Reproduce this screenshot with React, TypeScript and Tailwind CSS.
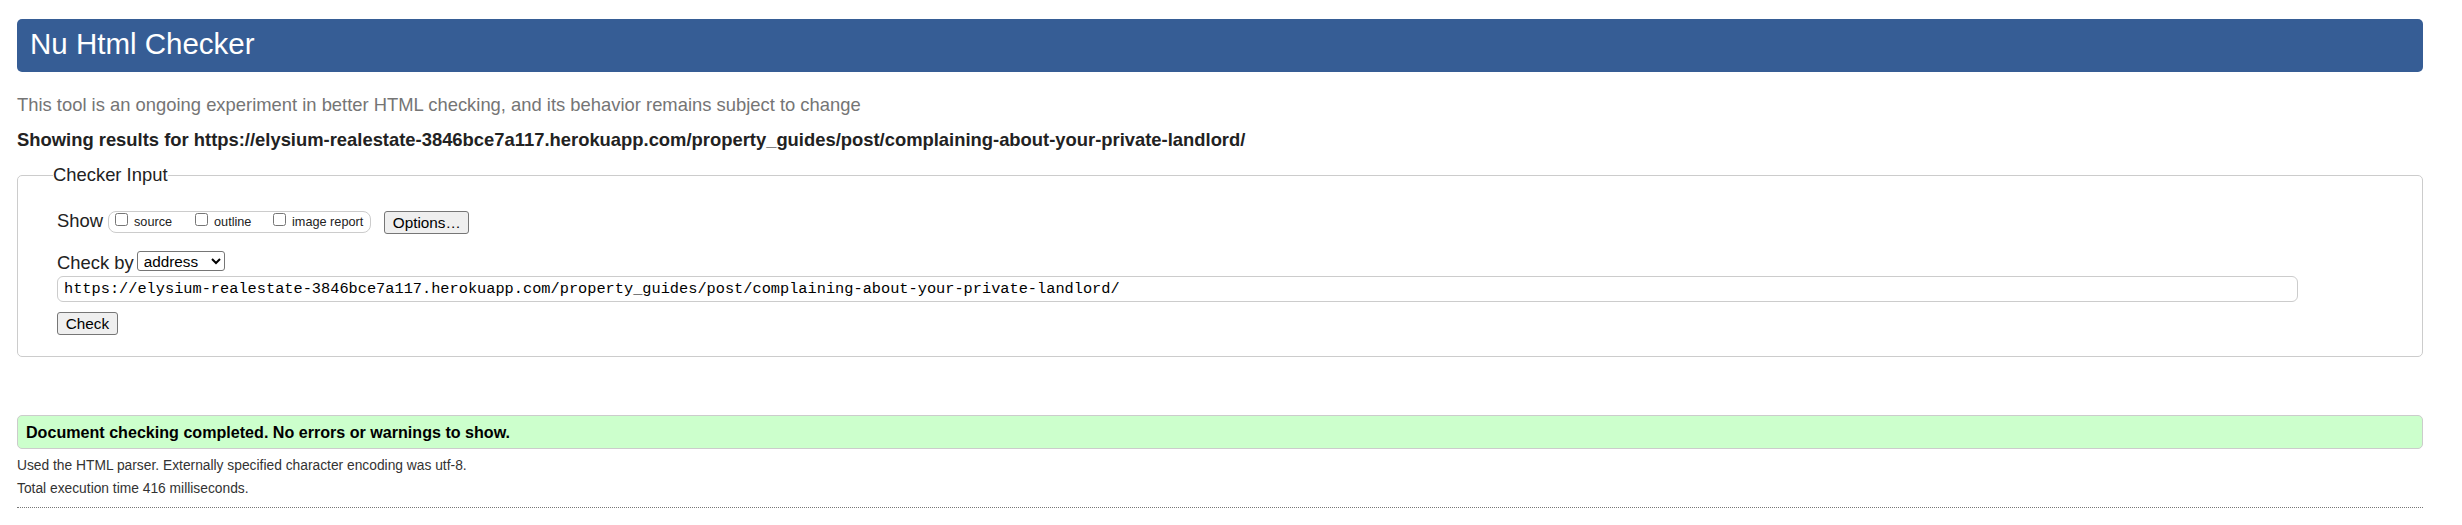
import React from 'react';

const url = 'https://elysium-realestate-3846bce7a117.herokuapp.com/property_guides/post/complaining-about-your-private-landlord/';

const showOptions = [
  { label: 'source', width: 'w-[80px]' },
  { label: 'outline', width: 'w-[78px]' },
  { label: 'image report', width: '' },
];

export default function App() {
  return (
    <div className="min-h-screen bg-white font-['Liberation_Sans',Arial,sans-serif] text-[#222] pl-[17px] pr-[39px] pt-[19px]">
      <h1 className="h-[53px] rounded-[5px] bg-[#365d95] pl-[13px] text-[29.5px] font-normal leading-[50px] text-white">
        Nu Html Checker
      </h1>

      <p className="mt-[21px] text-[18.4px] leading-[24px] text-[#757575]">
        This tool is an ongoing experiment in better HTML checking, and its behavior remains subject to change
      </p>
      <p className="mt-[11px] text-[18.4px] font-bold leading-[24px] text-[#222]">Showing results for {url}</p>

      <fieldset className="mt-[11px] rounded-[5px] border border-[#cccccc] pl-[39px] pb-[21px]">
        <legend className="ml-[-4px] p-0 text-[18.4px] leading-[24px]">Checker Input</legend>

        {/* show row */}
        <div className="mt-[24px] flex items-start">
          <span className="text-[18.4px] leading-[19px]">Show</span>
          <span className="ml-[5px] flex h-[22px] items-start rounded-[8px] border border-[#cccccc] pl-[6px] pr-[7px]">
            {showOptions.map((opt) => (
              <label key={opt.label} className={`flex items-start ${opt.width}`}>
                <input type="checkbox" className="m-0 mt-[1px] h-[13px] w-[13px]" />
                <span className="ml-[6px] mt-[3px] text-[12.7px] leading-[14px]">{opt.label}</span>
              </label>
            ))}
          </span>
          <button className="ml-[13px] h-[23px] w-[85px] rounded-[3px] border border-[#767676] bg-[#efefef] text-[15.3px] leading-[21px] text-black">
            Options…
          </button>
        </div>

        {/* check by row */}
        <div className="mt-[17px] flex items-start">
          <span className="mt-[2px] text-[18.4px] leading-[20px]">Check by</span>
          <select
            defaultValue="address"
            className="ml-[3px] h-[20px] w-[88px] rounded-[3px] border border-[#767676] bg-white pl-[2px] text-[15.3px] leading-[18px] text-black"
          >
            <option value="address">address</option>
            <option value="file">file upload</option>
            <option value="text">text input</option>
          </select>
        </div>
        <input
          type="text"
          defaultValue={url}
          className="mt-[3px] block h-[26px] w-[2241px] rounded-[6px] border border-[#cccccc] px-[6px] font-['Liberation_Mono','Courier_New',monospace] text-[15.3px] text-black"
        />
        <button className="mt-[10px] block h-[23px] w-[61px] rounded-[3px] border border-[#767676] bg-[#efefef] text-[15.3px] leading-[21px] text-black">
          Check
        </button>
      </fieldset>

      <div className="mt-[58px] h-[34px] rounded-[5px] border border-[#cccccc] bg-[#ccffcc] pl-[8px] text-[16.1px] font-bold leading-[32px] text-black">
        Document checking completed. No errors or warnings to show.
      </div>
      <p className="mt-[5px] text-[13.8px] leading-[23px] text-[#333]">
        Used the HTML parser. Externally specified character encoding was utf-8.
      </p>
      <p className="text-[13.8px] leading-[23px] text-[#333]">Total execution time 416 milliseconds.</p>
      <hr className="mt-[7px] border-0 border-t border-dotted border-[#777]" />
    </div>
  );
}
